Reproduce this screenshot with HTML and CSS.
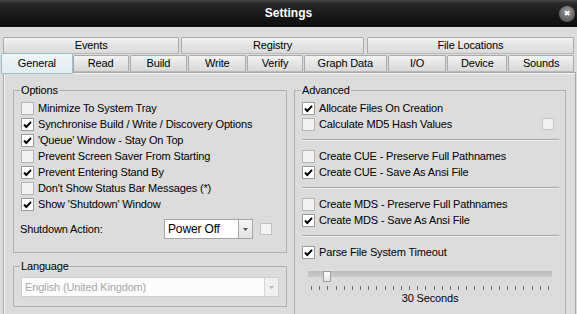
FILE: index.html
```html
<!DOCTYPE html>
<html lang="en">
<head>
    <meta charset="UTF-8">
    <title>Settings</title>
    <link rel="stylesheet" href="styles.css">
</head>
<body>

<!-- Title bar -->
<div class="titlebar">
    <span class="title">Settings</span>
    <button class="close-btn">&#10006;</button>
</div>

<!-- Tabs -->
<div class="tabs">
    <div class="tab-row top-row">
        <div class="tab t-events">Events</div>
        <div class="tab t-registry">Registry</div>
        <div class="tab t-files">File Locations</div>
    </div>
    <div class="tab-row">
        <div class="tab active t-general">General</div>
        <div class="tab t-read">Read</div>
        <div class="tab t-build">Build</div>
        <div class="tab t-write">Write</div>
        <div class="tab t-verify">Verify</div>
        <div class="tab t-graph">Graph Data</div>
        <div class="tab t-io">I/O</div>
        <div class="tab t-device">Device</div>
        <div class="tab t-sounds">Sounds</div>
    </div>
</div>

<div class="panel">
    <div class="left-col">
        <fieldset class="group options">
            <legend>Options</legend>
            <div class="check"><span class="box"></span>Minimize To System Tray</div>
            <div class="check"><span class="box on"></span>Synchronise Build / Write / Discovery Options</div>
            <div class="check"><span class="box on"></span>'Queue' Window - Stay On Top</div>
            <div class="check"><span class="box"></span>Prevent Screen Saver From Starting</div>
            <div class="check"><span class="box on"></span>Prevent Entering Stand By</div>
            <div class="check"><span class="box"></span>Don't Show Status Bar Messages (*)</div>
            <div class="check"><span class="box on"></span>Show 'Shutdown' Window</div>

            <div class="shutdown-row">
                <span class="field-label">Shutdown Action:</span>
                <div class="select shutdown-select">
                    <span class="select-text">Power Off</span>
                    <span class="select-btn"><svg width="5" height="3" viewBox="0 0 5 3"><path d="M0 0h5L2.5 3z" fill="#555"/></svg></span>
                </div>
                <span class="box small"></span>
            </div>
        </fieldset>

        <fieldset class="group language">
            <legend>Language</legend>
            <div class="select disabled">
                <span class="select-text">English (United Kingdom)</span>
                <span class="select-btn"><svg width="5" height="3" viewBox="0 0 5 3"><path d="M0 0h5L2.5 3z" fill="#b5b5b5"/></svg></span>
            </div>
        </fieldset>
    </div>

    <fieldset class="group advanced">
        <legend>Advanced</legend>
        <div class="check"><span class="box on"></span>Allocate Files On Creation</div>
        <div class="check"><span class="box"></span>Calculate MD5 Hash Values<span class="box small right"></span></div>
        <div class="sep"></div>
        <div class="check"><span class="box"></span>Create CUE - Preserve Full Pathnames</div>
        <div class="check"><span class="box on"></span>Create CUE - Save As Ansi File</div>
        <div class="sep"></div>
        <div class="check"><span class="box"></span>Create MDS - Preserve Full Pathnames</div>
        <div class="check"><span class="box on"></span>Create MDS - Save As Ansi File</div>
        <div class="sep"></div>
        <div class="check"><span class="box on"></span>Parse File System Timeout</div>

        <div class="slider">
            <div class="track"></div>
            <div class="thumb"></div>
        </div>
        <div class="ticks" id="ticks"></div>
        <div class="slider-label">30 Seconds</div>
    </fieldset>
</div>

<script>
    // tick marks under the slider
    const ticks = document.getElementById('ticks');
    for (let i = 0; i < 30; i++) {
        const t = document.createElement('span');
        ticks.appendChild(t);
    }
</script>

</body>
</html>
```

FILE: styles.css
```css
/* Basic Reset */
* {
    margin: 0;
    padding: 0;
    box-sizing: border-box;
}

body {
    width: 577px;
    height: 314px;
    overflow: hidden;
    font-family: "Liberation Sans", Arial, sans-serif;
    font-size: 11px;
    letter-spacing: -0.15px;
    color: #000;
    background: #dcdcdc;
}

/* Title bar */
.titlebar {
    position: relative;
    height: 27px;
    display: flex;
    align-items: center;
    justify-content: center;
    background: linear-gradient(#4a4a4a 0, #2a2a2a 3px, #1c1c1c 12px, #0d0d0d 100%);
}

.title {
    color: #fff;
    font-weight: bold;
    font-size: 12px;
    letter-spacing: 0;
    margin-top: -2px;
}

.close-btn {
    position: absolute;
    right: 2px;
    top: 6px;
    width: 16px;
    height: 16px;
    border: none;
    border-radius: 50%;
    background: radial-gradient(circle at 50% 35%, #9a9a9a, #555 80%);
    color: #fff;
    font-size: 8px;
    font-weight: bold;
    line-height: 16px;
    text-align: center;
    font-family: "DejaVu Sans", sans-serif;
}

/* Tabs */
.tabs {
    padding: 10px 2px 0 3px;
}

.tab-row {
    display: flex;
    height: 17px;
}

.top-row {
    margin-bottom: 1px;
}

.tab {
    height: 17px;
    margin-right: 1px;
    border: 1px solid #a9a9a9;
    border-bottom-color: #b8b8b8;
    border-radius: 2px 2px 0 0;
    background: linear-gradient(#f4f4f4, #e4e4e4 50%, #dadada);
    text-align: center;
    line-height: 15px;
    white-space: nowrap;
}

.t-events { width: 177px; margin-right: 2px; }
.t-registry { width: 183px; margin-right: 3px; }
.t-files { width: 208px; }

.t-general { width: 72px; }
.t-read { width: 56px; }
.t-build { width: 58px; }
.t-write { width: 58px; }
.t-verify { width: 56px; }
.t-graph { width: 83px; }
.t-io { width: 59px; }
.t-device { width: 60px; }
.t-sounds { width: 66px; }

.tab.active {
    position: relative;
    z-index: 1;
    height: 21px;
    margin: -2px 0 0 -2px;
    border-color: #9cc0c8;
    border-radius: 2px 2px 0 0;
    background: linear-gradient(#eef6f8, #e2eef1);
    line-height: 19px;
}

/* Panel */
.panel {
    display: grid;
    grid-template-columns: 274px 272px;
    column-gap: 7px;
    align-items: start;
    height: 242px;
    overflow: hidden;
    margin: 0 1px 0 3px;
    padding: 10px 0 0 9px;
    border: 1px solid #a9a9a9;
    border-bottom: none;
    box-shadow: inset 1px 1px #f6f6f6;
}

/* Group boxes */
.group {
    min-width: 0;
    border: 1px solid #b0b0b0;
    padding: 3px 6px 0 7px;
}

.group legend {
    padding: 0 1px;
    margin-left: -1px;
    line-height: 14px;
}

.options {
    padding-bottom: 13px;
}

.language {
    margin-top: 6px;
    padding: 4px 7px 9px 7px;
}

.advanced {
    height: 240px;
}

/* Checkboxes */
.check {
    display: flex;
    align-items: center;
    height: 16px;
    white-space: nowrap;
}

.box {
    flex: 0 0 13px;
    width: 13px;
    height: 13px;
    margin-right: 4px;
    border: 1px solid #b4b4b4;
    background: #f3f3f3;
}

.box.on {
    border-color: #9a9a9a;
    background: #fff url("data:image/svg+xml,%3Csvg xmlns='http://www.w3.org/2000/svg' width='11' height='11'%3E%3Cpath d='M2 5.5l2.3 2.5L9 2.8' fill='none' stroke='%23000' stroke-width='2'/%3E%3C/svg%3E") no-repeat center;
}

.box.small {
    flex: 0 0 12px;
    width: 12px;
    height: 12px;
    margin: 0;
    border-color: #c2c2c2;
}

.box.right {
    margin: 0 5px 0 auto;
}

.sep {
    height: 2px;
    margin: 7px 0 7px;
    border-top: 1px solid #a9a9a9;
    border-bottom: 1px solid #f2f2f2;
}

/* Shutdown action */
.shutdown-row {
    display: flex;
    align-items: center;
    margin-top: 7px;
}

.field-label {
    width: 144px;
    margin-left: -1px;
}

.select {
    display: flex;
    height: 20px;
    border: 1px solid #a5a5a5;
    background: #fff;
}

.shutdown-select {
    width: 89px;
    margin-right: 7px;
}

.select-text {
    flex: 1;
    padding-left: 3px;
    line-height: 18px;
    font-size: 12px;
}

.select-btn {
    width: 14px;
    display: flex;
    align-items: center;
    justify-content: center;
    border-left: 1px solid #a5a5a5;
    background: linear-gradient(#f7f7f7, #e2e2e2);
}

.select.disabled {
    border-color: #d0d0d0;
    background: #fbfbfb;
    color: #a8a8a8;
}

.select.disabled .select-text {
    font-size: 11px;
}

.select.disabled .select-btn {
    border-color: #d6d6d6;
    background: #f0f0f0;
}

/* Slider */
.slider {
    position: relative;
    height: 12px;
    width: 244px;
    margin: 11px 0 0 6px;
}

.track {
    height: 6px;
    margin-top: 2px;
    border-radius: 1px;
    background: linear-gradient(#bdbdbd, #cacaca);
}

.thumb {
    position: absolute;
    left: 15px;
    top: 0;
    width: 8px;
    height: 11px;
    border: 1px solid #9c9c9c;
    background: linear-gradient(#fbfbfb, #e6e6e6);
}

.ticks {
    display: flex;
    justify-content: space-between;
    width: 238px;
    height: 5px;
    margin: 3px 0 0 9px;
}

.ticks span {
    width: 1px;
    height: 4px;
    background: #6a6a6a;
}

.slider-label {
    width: 256px;
    margin-top: 0;
    text-align: center;
    line-height: 14px;
}
```
